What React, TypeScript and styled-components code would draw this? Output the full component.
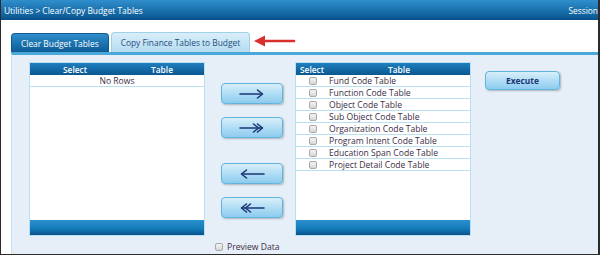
import React from 'react'
import styled, { createGlobalStyle } from 'styled-components'

const Global = createGlobalStyle`
  html, body {
    margin: 0;
    padding: 0;
    background: #fff;
    font-family: "Open Sans", "Liberation Sans", sans-serif;
  }
`

const rows = [
  'Fund Code Table',
  'Function Code Table',
  'Object Code Table',
  'Sub Object Code Table',
  'Organization Code Table',
  'Program Intent Code Table',
  'Education Span Code Table',
  'Project Detail Code Table',
]

const Arrow = ({ dir, double }: { dir: 'right' | 'left'; double?: boolean }) => (
  <svg width="28" height="12" viewBox="0 0 28 12">
    <g
      fill="none"
      stroke="#1c3576"
      strokeWidth="1.6"
      strokeLinecap="round"
      strokeLinejoin="round"
      transform={dir === 'left' ? 'translate(28 0) scale(-1 1)' : undefined}
    >
      <line x1="2" y1="6" x2="24" y2="6" />
      <polyline points="19.5,2 24.5,6 19.5,10" />
      {double && <polyline points="15.5,2 20.5,6 15.5,10" />}
    </g>
  </svg>
)

const App = () => {
  return (
    <Frame>
      <Global />
      <TopBar>
        <span>Utilities &gt; Clear/Copy Budget Tables</span>
        <span>Session</span>
      </TopBar>
      <TabRow>
        <Tab>Clear Budget Tables</Tab>
        <Tab active>Copy Finance Tables to Budget</Tab>
        <svg width="42" height="12" viewBox="0 0 42 12" style={{ marginLeft: 2, marginBottom: 5 }}>
          <line x1="9" y1="6" x2="40" y2="6" stroke="#d9302c" strokeWidth="2.6" strokeLinecap="round" />
          <polygon points="0,6 11,0.5 11,11.5" fill="#d9302c" />
        </svg>
      </TabRow>
      <Panel>
        <Grid>
          <TableBox>
            <Head>
              <HCell w={90}>Select</HCell>
              <HCell>Table</HCell>
            </Head>
            <Row center>No Rows</Row>
            <Body />
            <Foot />
          </TableBox>
          <Middle>
            <MoveBtn><Arrow dir="right" /></MoveBtn>
            <MoveBtn><Arrow dir="right" double /></MoveBtn>
            <MoveBtn top={25}><Arrow dir="left" /></MoveBtn>
            <MoveBtn><Arrow dir="left" double /></MoveBtn>
          </Middle>
          <TableBox>
            <Head>
              <HCell w={32}>Select</HCell>
              <HCell>Table</HCell>
            </Head>
            {rows.map((r) => (
              <Row key={r}>
                <Check />
                <span>{r}</span>
              </Row>
            ))}
            <Body />
            <Foot />
          </TableBox>
          <Side>
            <ExecBtn>Execute</ExecBtn>
          </Side>
        </Grid>
        <Preview>
          <Check />
          <span>Preview Data</span>
        </Preview>
      </Panel>
    </Frame>
  )
}

export default App

const Frame = styled.div`
  width: 600px;
  height: 255px;
  box-sizing: border-box;
  border-left: 1px solid #2b2b2b;
  border-right: 2px solid #2b2b2b;
  border-bottom: 1px solid #2b2b2b;
  display: flex;
  flex-direction: column;
  overflow: hidden;
  background: #fff;
`
const TopBar = styled.div`
  height: 20px;
  flex: none;
  display: flex;
  justify-content: space-between;
  align-items: center;
  padding: 0 0 0 4px;
  margin-left: -1px;
  background: linear-gradient(#2f8fcc, #0d5d98 85%, #0a4f85);
  color: #fff;
  font-size: 8.4px;
  white-space: nowrap;
`
const TabRow = styled.div`
  height: 32px;
  flex: none;
  display: flex;
  align-items: flex-end;
  padding-left: 10px;
  gap: 2px;
`
const Tab = styled.div<{ active?: boolean }>`
  height: ${(p) => (p.active ? 19 : 18)}px;
  padding: 0 ${(p) => (p.active ? 9 : 9)}px;
  display: flex;
  align-items: center;
  border-radius: 4px 4px 0 0;
  font-size: 8.4px;
  white-space: nowrap;
  color: ${(p) => (p.active ? '#1d4c7c' : '#fff')};
  background: ${(p) =>
    p.active
      ? 'linear-gradient(#d9eef9, #b5dcf1)'
      : 'linear-gradient(#2e8dca, #0c5b96)'};
  border: 1px solid ${(p) => (p.active ? '#9fd0ea' : '#0d5a92')};
  border-bottom: none;
`
const Panel = styled.div`
  flex: 1;
  margin-left: 10px;
  border-top: 3px solid #4ba8da;
  border-left: 1px solid #c5e2f2;
  background: #e6eef7;
  padding: 7px 0 0 17px;
  display: flex;
  flex-direction: column;
`
const Grid = styled.div`
  display: flex;
  align-items: flex-start;
`
const TableBox = styled.div`
  width: 174px;
  height: 172px;
  display: flex;
  flex-direction: column;
  background: #fff;
  border: 1px solid #b9e0f2;
`
const Head = styled.div`
  height: 12px;
  flex: none;
  display: flex;
  align-items: center;
  background: linear-gradient(#1f7fbf, #0a5790);
  color: #fff;
  font-size: 8.4px;
  font-weight: 600;
`
const HCell = styled.div<{ w?: number }>`
  ${(p) => (p.w ? `width: ${p.w}px;` : 'flex: 1;')}
  text-align: center;
`
const Row = styled.div<{ center?: boolean }>`
  height: 11px;
  flex: none;
  display: flex;
  align-items: center;
  justify-content: ${(p) => (p.center ? 'center' : 'flex-start')};
  border-bottom: 1px solid #b9e0f2;
  font-size: 8.6px;
  color: #3b2d45;
  white-space: nowrap;
  padding-left: ${(p) => (p.center ? 0 : 13)}px;
  gap: 12px;
`
const Check = styled.span`
  width: 8px;
  height: 8px;
  flex: none;
  box-sizing: border-box;
  border: 1px solid #a9a9a9;
  border-radius: 2px;
  background: linear-gradient(#f4f4f4, #d6d6d6);
`
const Body = styled.div`
  flex: 1;
`
const Foot = styled.div`
  height: 15px;
  flex: none;
  background: linear-gradient(#2a8fcd, #1479b8 60%, #0a5189);
`
const Middle = styled.div`
  width: 90px;
  display: flex;
  flex-direction: column;
  align-items: center;
  gap: 13px;
  padding-top: 21px;
  padding-left: 4px;
  box-sizing: border-box;
`
const MoveBtn = styled.div<{ top?: number }>`
  width: 60px;
  height: 19px;
  margin-top: ${(p) => (p.top ? p.top - 13 : 0)}px;
  display: flex;
  align-items: center;
  justify-content: center;
  border: 1px solid #62b3de;
  border-radius: 4px;
  background: linear-gradient(#d8eefa, #a9daf4 60%, #8ecbee);
  box-shadow: 1px 1px 2px rgba(0, 0, 0, 0.25);
`
const Side = styled.div`
  padding: 9px 0 0 14px;
`
const ExecBtn = styled.div`
  width: 73px;
  height: 17px;
  display: flex;
  align-items: center;
  justify-content: center;
  border: 1px solid #62b3de;
  border-radius: 4px;
  background: linear-gradient(#d8eefa, #a9daf4 60%, #8ecbee);
  box-shadow: 1px 1px 2px rgba(0, 0, 0, 0.25);
  color: #1c3576;
  font-size: 8.4px;
  font-weight: 700;
`
const Preview = styled.div`
  display: flex;
  align-items: center;
  gap: 4px;
  margin: 5px 0 0 186px;
  font-size: 8.6px;
  color: #3b2d45;
`
